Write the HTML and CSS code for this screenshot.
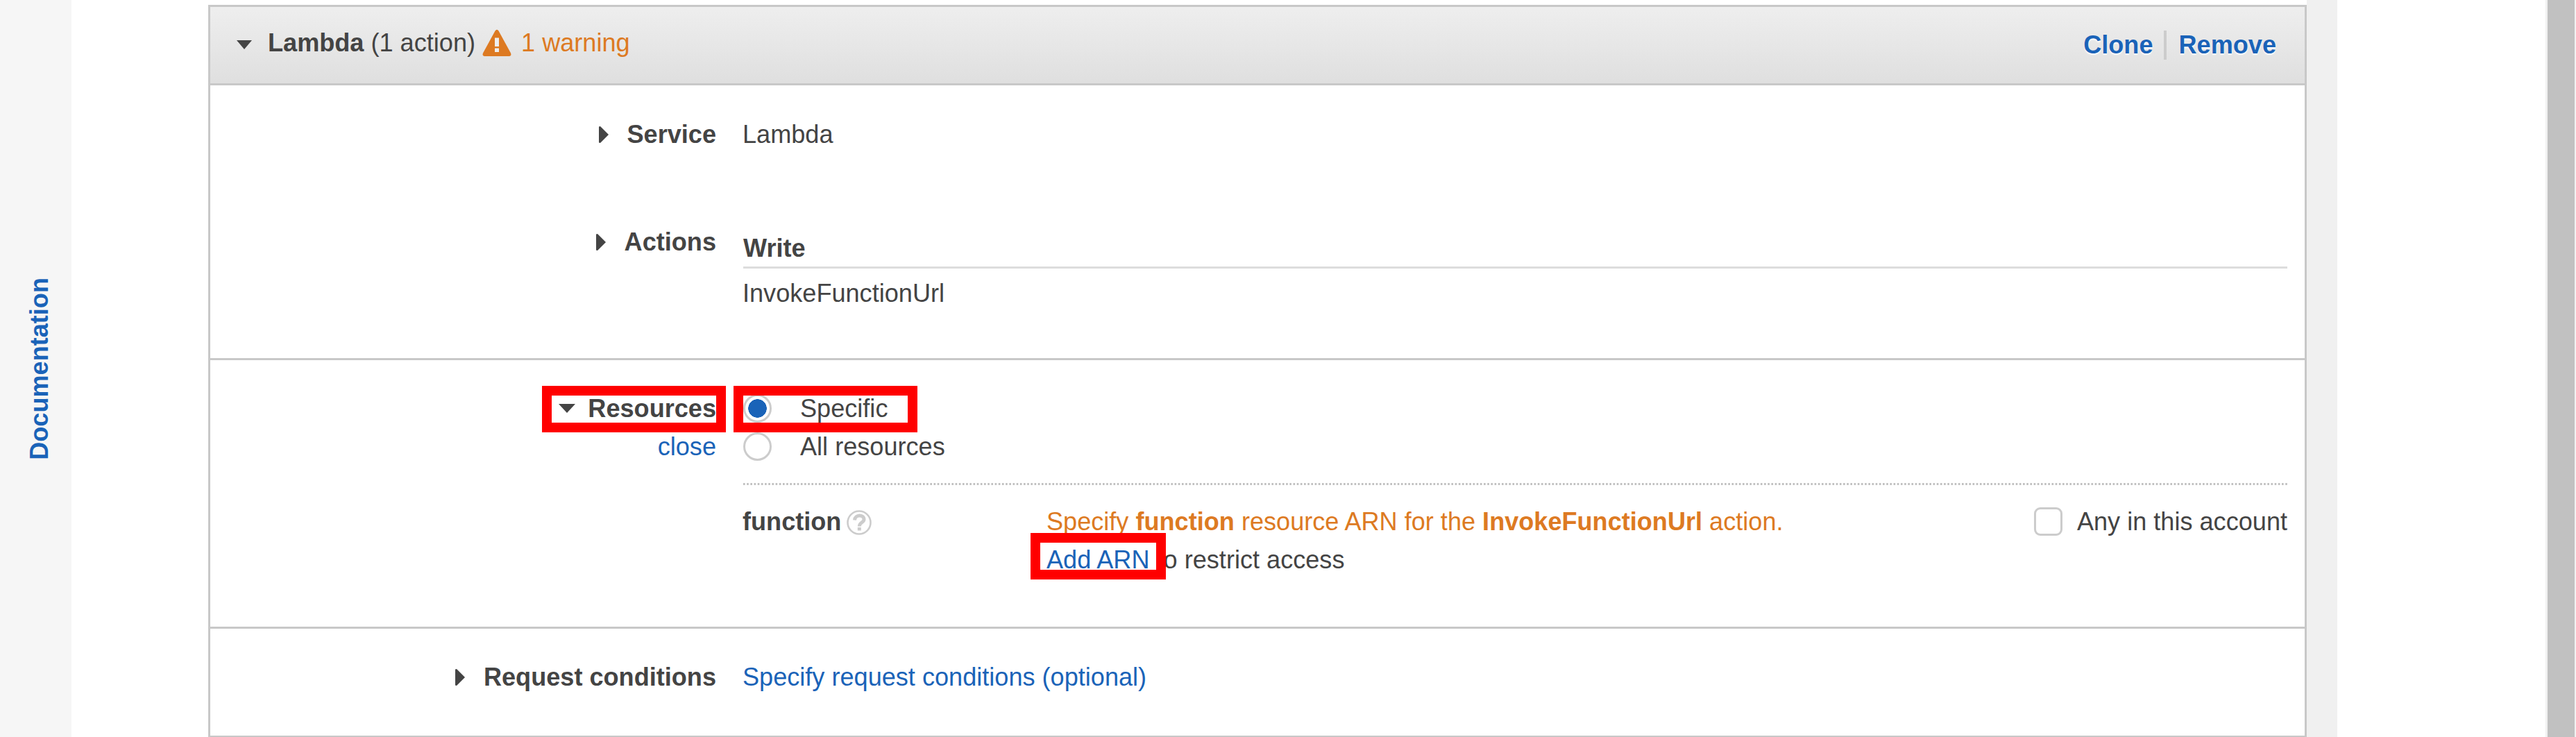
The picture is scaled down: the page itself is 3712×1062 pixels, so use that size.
FILE: index.html
```
<!DOCTYPE html>
<html lang="en">
  <head>
    <meta charset="UTF-8" />
    <title>Create policy</title>
    <link rel="stylesheet" href="styles.css">
  </head>
  <body>
    <aside class="sidebar">
      <a class="sidebar-link">Documentation</a>
    </aside>

    <main class="content">
      <div class="panel">
        <div class="panel-header">
          <svg class="caret" viewBox="0 0 24 24"><path d="M1 5h22L12 18z" /></svg>
          <div class="panel-title"><b>Lambda</b> (1 action)</div>
          <svg class="warning-icon" viewBox="0 0 42 40">
            <path class="warning-shape" d="M18.500 2.500Q21 -1 23.500 2.500L41 34.500Q42.500 39 38.500 39H3.500Q-.5 39 1 34.500z" />
            <path class="warning-mark" d="M18 12.500h6v12.500h-6zM18 27.500h6v5.500h-6z" />
          </svg>
          <span class="warning-text">1 warning</span>
          <div class="panel-actions">
            <a>Clone</a>
            <a>Remove</a>
          </div>
        </div>

        <section class="section section-main">
          <div class="row row-service">
            <div class="label">
              <svg class="caret" viewBox="0 0 24 24"><path d="M1 .5l2-.5 12 12L3 24l-2-.5z" /></svg>
              <b>Service</b>
            </div>
            <div class="value">Lambda</div>
          </div>
          <div class="row">
            <div class="label">
              <svg class="caret" viewBox="0 0 24 24"><path d="M1 .5l2-.5 12 12L3 24l-2-.5z" /></svg>
              <b>Actions</b>
            </div>
            <div class="value">
              <div class="access-level">Write</div>
              <div>InvokeFunctionUrl</div>
            </div>
          </div>
        </section>

        <section class="section section-resources">
          <div class="row">
            <div>
              <div class="label">
                <svg class="caret" viewBox="0 0 24 24"><path d="M0 5h24L12 18z" /></svg>
                <b>Resources</b>
                <span class="highlight highlight-resources"></span>
              </div>
              <div class="label"><a>close</a></div>
            </div>
            <div class="value">
              <div class="option">
                <span class="radio checked"></span>Specific
                <span class="highlight highlight-specific"></span>
              </div>
              <div class="option"><span class="radio"></span>All resources</div>
              <svg class="dotted" height="3"><line x1="0" y1="1.500" x2="100%" y2="1.500" /></svg>
              <div class="resource">
                <div class="resource-name">
                  <b>function</b>
                  <svg class="help-icon" viewBox="0 0 36 36">
                    <circle cx="18" cy="18" r="16.500" />
                    <path d="M11.500 14.500C12 6 25 6 25 13.500C25 18 18.300 17.500 18.300 23.500M18.300 25v4.500" />
                  </svg>
                </div>
                <div class="resource-text">
                  <div class="warning-text">Specify <b>function</b> resource ARN for the <b>InvokeFunctionUrl</b> action.</div>
                  <div class="arn-line"><a>Add ARN</a> to restrict access
                    <span class="highlight highlight-arn"></span>
                  </div>
                </div>
                <div class="any-account"><span class="checkbox"></span>Any in this account</div>
              </div>
            </div>
          </div>
        </section>

        <section class="section section-conditions">
          <div class="row">
            <div class="label">
              <svg class="caret" viewBox="0 0 24 24"><path d="M1 .5l2-.5 12 12L3 24l-2-.5z" /></svg>
              <b>Request conditions</b>
            </div>
            <div class="value"><a>Specify request conditions (optional)</a></div>
          </div>
        </section>
      </div>
    </main>

    <div class="gutter"></div>
    <div class="scrollbar"></div>
  </body>
</html>
```
FILE: styles.css
```
* {
  box-sizing: border-box;
}

body {
  margin: 0;
  height: 1062px;
  overflow: hidden;
  display: flex;
  background: #fff;
  color: #444;
  font-family: "Liberation Sans", Arial, sans-serif;
  font-size: 36.12px;
  line-height: 54.6px;
}

a {
  color: #1a63b8;
}

/* Left rail */
.sidebar {
  width: 103px;
  background: #f6f6f6;
  display: flex;
  align-items: center;
  justify-content: center;
}

.sidebar-link {
  writing-mode: vertical-rl;
  transform: rotate(180deg);
  font-weight: bold;
  margin-right: -11px;
}

.content {
  width: 3221px;
  padding: 7px 0 0 197px;
}

.panel {
  height: 1055px;
  border: 3px solid #c8c8c8;
  border-bottom-width: 2px;
}

.panel-header {
  height: 113px;
  display: flex;
  align-items: center;
  padding: 0 41px 6px 36px;
  border-bottom: 3px solid #c8c8c8;
  background: linear-gradient(#eee, #dfdfdf);
}

.caret {
  width: 24px;
  height: 24px;
  margin-right: 18px;
  fill: #444;
  flex: none;
}

.panel-header .caret {
  margin: 6px 22px 0 1px;
}

.warning-icon {
  width: 42px;
  height: 40px;
  margin: 0 14px 0 10px;
}

.warning-shape {
  fill: #dd7a22;
}

.warning-mark {
  fill: #eee;
}

.warning-text {
  color: #dd7a22;
}

.panel-actions {
  margin-left: auto;
  display: flex;
  align-items: center;
  font-weight: bold;
  padding-top: 5px;
  text-shadow: 0 2px 2px #fff;
}

.panel-actions a {
  line-height: 42px;
}

.panel-actions a + a {
  margin-left: 15px;
  padding-left: 18px;
  border-left: 4px solid #ccc;
}

/* Sections */
.section {
  border-bottom: 3px solid #c8c8c8;
}

.section-main {
  height: 396px;
  padding-top: 44px;
}

.section-resources {
  height: 387px;
  padding-top: 43px;
}

.section-conditions {
  padding-top: 43px;
  border-bottom: none;
}

.row {
  display: grid;
  grid-template-columns: 729px 1fr;
  column-gap: 38px;
  padding-right: 25px;
}

.row-service {
  height: 155px;
}

.label {
  position: relative;
  height: 54.6px;
  display: flex;
  align-items: center;
  justify-content: flex-end;
}

.access-level {
  height: 55.6px;
  margin: 9px 0 9px 1px;
  font-weight: bold;
  border-bottom: 3px solid #ddd;
}

.option {
  position: relative;
  display: flex;
  align-items: center;
}

.radio {
  width: 41px;
  height: 41px;
  margin: 0 41px 1px 1px;
  border: 3px solid #ccc;
  border-radius: 50%;
}

.radio.checked {
  background: radial-gradient(circle, #1a63b8 13px, #fff 13.5px);
}

.dotted {
  display: block;
  width: calc(100% - 1px);
  margin: 25px 0 26px 1px;
}

.dotted line {
  stroke: #c0c0c0;
  stroke-width: 3;
  stroke-dasharray: 2.6 2.58;
}

.resource {
  display: flex;
}

.resource-name {
  width: 438px;
  height: 54.6px;
  display: flex;
  align-items: center;
}

.help-icon {
  width: 36px;
  height: 36px;
  margin: 1px 0 0 8px;
  fill: none;
  stroke: #ccc;
  stroke-width: 2.600;
}

.help-icon path {
  stroke-width: 5;
}

.arn-line {
  position: relative;
}

.any-account {
  height: 54.6px;
  margin-left: auto;
  display: flex;
  align-items: center;
}

.checkbox {
  width: 41px;
  height: 41px;
  margin: 0 21px 2px 0;
  border: 3px solid #ccc;
  border-radius: 9px;
}

/* Red callout boxes drawn over the controls */
.highlight {
  position: absolute;
  top: -6px;
  width: 265px;
  height: 67px;
  border: 14px solid #f00;
}

.highlight-resources {
  right: -14px;
}

.highlight-specific {
  left: -13px;
}

.highlight-arn {
  top: -11.6px;
  left: -23px;
  width: 195px;
}

.gutter {
  width: 44px;
  background: #f0f0f0;
}

.scrollbar {
  width: 44px;
  margin-left: auto;
  background: #c1c1c1;
  border: solid #f1f1f1;
  border-width: 0 2px 0 3px;
}
```
